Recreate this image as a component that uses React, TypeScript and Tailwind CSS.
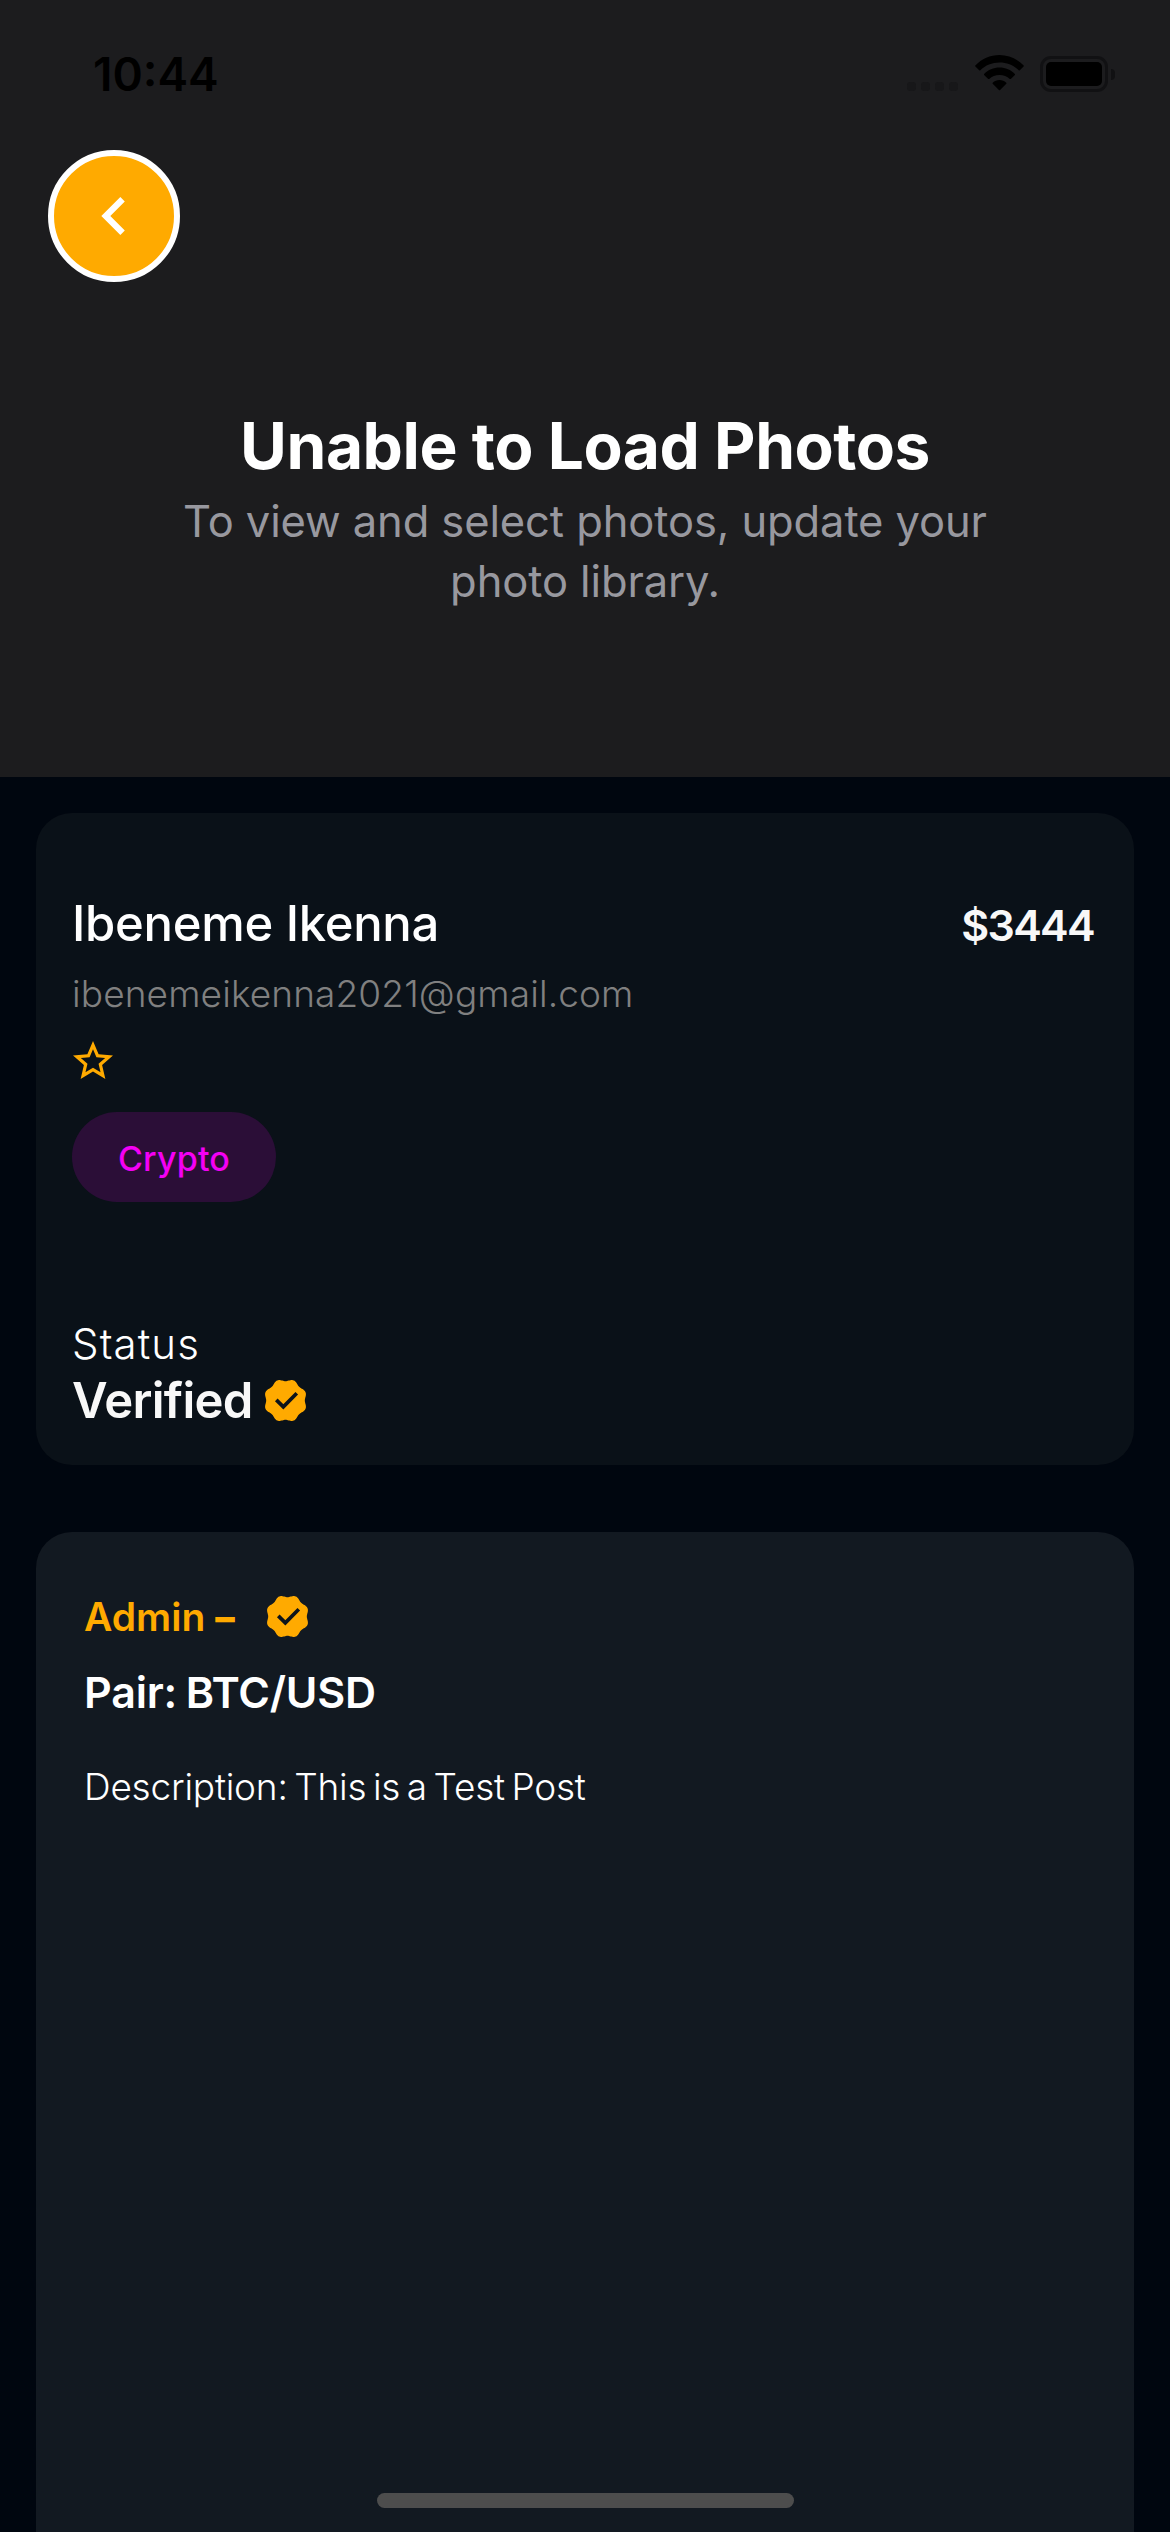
import { MdChevronLeft, MdStarBorder } from "react-icons/md";

function Badge() {
  const pts: string[] = [];
  const n = 160;
  for (let i = 0; i < n; i++) {
    const t = (i / n) * Math.PI * 2;
    const r = 20 - 1.15 * Math.cos(8 * t);
    pts.push(`${(20 + r * Math.cos(t)).toFixed(2)},${(20 + r * Math.sin(t)).toFixed(2)}`);
  }
  return (
    <svg width="41" height="41" viewBox="0 0 40 40" className="-mt-[2px] shrink-0">
      <polygon points={pts.join(" ")} fill="#ffaa00" />
      <path d="M11 19.400L17.900 26.200L31 13" fill="none" stroke="#0d141b" strokeWidth="3.6" />
    </svg>
  );
}

function StatusBar() {
  return (
    <div className="flex h-[150px] justify-between pt-[55px] pr-[55px] pl-[93px]">
      <div className="text-[46px] leading-[38px] font-semibold text-black">10:44</div>
      <div className="flex">
        <div className="mt-[27px] flex gap-[5px]">
          <i className="size-[9px] rounded-[3px] bg-[#171719]" />
          <i className="size-[9px] rounded-[3px] bg-[#171719]" />
          <i className="size-[9px] rounded-[3px] bg-[#171719]" />
          <i className="size-[9px] rounded-[3px] bg-[#171719]" />
        </div>
        <svg className="ml-[17px]" width="49" height="36" viewBox="0 0 49 36">
          <path d="M24.5 0C15.200 0 6.600 3.900 0.300 10.500Q0 11 0.400 11.400L4.200 15.200Q4.800 15.700 5.300 15.200C10.400 10.300 17.100 7.500 24.500 7.500S38.600 10.300 43.700 15.200Q44.200 15.700 44.800 15.200L48.600 11.400Q49 11 48.700 10.500C42.400 3.900 33.800 0 24.500 0Z" />
          <path d="M24.500 12.500C18.500 12.500 13.100 14.900 9.100 18.900Q8.700 19.400 9.100 19.900L13.200 23.900Q13.700 24.300 14.200 23.900C16.900 21.400 20.500 19.900 24.500 19.900S32.100 21.400 34.800 23.900Q35.300 24.300 35.800 23.900L39.900 19.900Q40.300 19.400 39.900 18.900C35.900 14.900 30.500 12.500 24.500 12.500Z" />
          <path d="M24.500 25C21.900 25 19.500 26 17.700 27.700Q17.200 28.200 17.700 28.700L23.900 34.900Q24.500 35.500 25.100 34.900L31.300 28.700Q31.800 28.200 31.300 27.700C29.500 26 27.100 25 24.500 25Z" />
        </svg>
        <div className="mt-[1px] ml-[16px] h-[36px] w-[68px] rounded-[11px] border-3 border-[#111113] p-[3px]">
          <div className="h-full rounded-[5px] bg-black" />
        </div>
        <div className="mt-[14px] ml-[3px] h-[11px] w-[4px] rounded-r-full bg-[#111113]" />
      </div>
    </div>
  );
}

export default function App() {
  return (
    <div className="flex h-[2532px] w-[1170px] flex-col overflow-hidden bg-[#00060f] font-['Inter',sans-serif] text-white">
      <header className="h-[777px] shrink-0 bg-[#1c1c1e]">
        <StatusBar />
        <button className="ml-[48px] flex size-[132px] items-center justify-center rounded-full border-6 border-white bg-[#ffaa00]">
          <MdChevronLeft size={76} />
        </button>
        <div className="mt-[125px] flex flex-col items-center whitespace-nowrap">
          <h1 className="text-[64px] leading-[78px] font-bold tracking-[-0.45px]">Unable to Load Photos</h1>
          <p className="mt-[6px] text-center text-[43.5px] leading-[60px] tracking-[-0.1px] text-[#98989f]">
            To view and select photos, update your
            <br />
            photo library.
          </p>
        </div>
      </header>

      <section className="mx-[36px] mt-[36px] h-[652px] shrink-0 rounded-[36px] bg-[#0a1118] px-[36px] pt-[80px] whitespace-nowrap">
        <div className="flex items-center justify-between pr-[4px]">
          <h2 className="pt-px text-[49px] leading-[59px] font-medium tracking-[-0.3px]">Ibeneme Ikenna</h2>
          <span className="pt-[4px] text-[43px] leading-[56px] font-semibold tracking-[-1.7px] text-[#f8f8f8]">$3444</span>
        </div>
        <p className="mt-[17px] text-[37px] leading-[48px] font-light tracking-[0.12px] text-[#808080]">ibenemeikenna2021@gmail.com</p>
        <MdStarBorder size={48} className="mt-[19px] ml-[-3px] text-[#ffaa00]" />
        <div className="mt-[27px] flex h-[90px] w-[204px] items-center justify-center rounded-full bg-[#2b0e37] pt-[3px] text-[34px] font-medium tracking-[0.2px] text-[#f400f4]">
          Crypto
        </div>
        <p className="mt-[117px] text-[42px] leading-[50px] font-light tracking-[1.1px]">Status</p>
        <div className="mt-[2px] flex items-center">
          <strong className="w-[193px] text-[49px] leading-[60px] font-semibold tracking-[-0.7px] text-[#f8f8f8]">Verified</strong>
          <Badge />
        </div>
      </section>

      <section className="mx-[36px] mt-[67px] h-[1000px] shrink-0 rounded-t-[36px] bg-[#121921] px-[48px] pt-[60px] whitespace-nowrap">
        <div className="flex items-center">
          <span className="w-[183px] text-[39px] leading-[50px] font-semibold text-[#ffaa00]">
            Admin <b className="font-extrabold">–</b>
          </span>
          <Badge />
        </div>
        <h3 className="mt-[24px] text-[43px] leading-[52px] font-semibold tracking-[-0.2px] [word-spacing:-2px]">Pair: BTC/USD</h3>
        <p className="mt-[45px] text-[37px] leading-[48px] font-light tracking-[-0.22px] [word-spacing:-3.6px]">Description: This is a Test Post</p>
      </section>

      <div className="fixed top-[2493px] left-[377px] h-[15px] w-[417px] rounded-full bg-[#4d4d4d]" />
    </div>
  );
}
